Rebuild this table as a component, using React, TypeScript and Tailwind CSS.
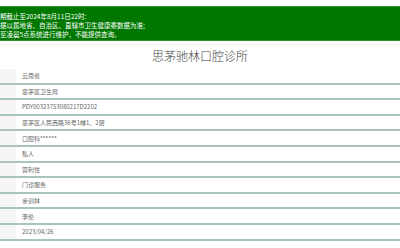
const rows = [
  "云南省",
  "思茅区卫生局",
  "PDY00323753080217D2202",
  "思茅区人民西路36号1幢1、2层",
  "口腔科******",
  "私人",
  "营利性",
  "门诊服务",
  "余训林",
  "李伦",
  "2023/04/26",
];

export default function App() {
  return (
    <div className="w-[400px] h-[248px] overflow-hidden bg-white font-['Noto_Sans_CJK_SC',sans-serif]">
      <div className="mt-[6px] h-[35px] bg-[#007800] border-y border-[#2f8f2f] pt-[5px] text-[6.5px] leading-[9px] text-white whitespace-nowrap">
        <p>期截止至2024年8月11日22时:</p>
        <p>据以属地省、自治区、直辖市卫生健康委数据为准;</p>
        <p>至凌晨5点系统进行维护，不能提供查询。</p>
      </div>
      <h1 className="h-[28px] pt-[2px] flex items-center justify-center text-[12px] font-light text-[#444]">思茅驰林口腔诊所</h1>
      <div className="flex flex-col">
        {rows.map((v) => (
          <div key={v} className="flex h-[15.6px] border-b-2 border-[#a9c4ba]">
            <div className="w-[16px] bg-[#f5f5f5]" />
            <div className="flex items-center pl-[6px] text-[6px] text-[#666] whitespace-nowrap">{v}</div>
          </div>
        ))}
      </div>
    </div>
  );
}
